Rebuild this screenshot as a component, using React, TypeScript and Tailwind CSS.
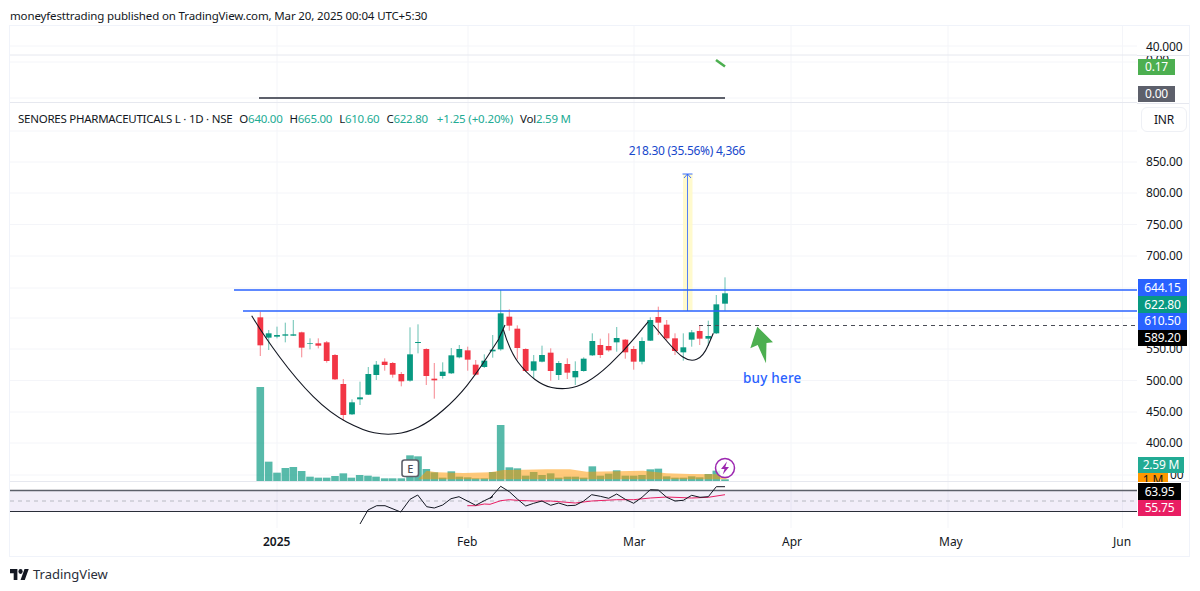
import React from "react";

type C = [number, number, number, number, number, "R" | "G"];
const c1: C[] = [
  [91,142,226,125,258,"R"],[116,190,203,180,240,"G"],[141,195,200,170,205,"G"],[166,193,197,158,217,"G"],[190,193,197,150,198,"G"],
  [215,187,233,185,262,"R"],[240,219,221,205,238,"G"],[265,220,227,205,235,"R"],[290,217,273,213,278,"R"],[315,255,328,252,330,"R"],
  [340,342,435,327,452,"R"],[366,397,433,388,435,"G"],[390,382,388,335,405,"G"],[415,312,374,291,375,"G"],[439,284,315,273,330,"G"],
  [464,275,285,265,302,"R"],[488,279,314,276,323,"R"],[514,312,334,306,349,"R"],[540,253,332,172,335,"G"],[564,216,219,163,250,"G"],
  [589,237,318,235,345,"R"],[613,326,331,279,386,"R"],[638,305,318,277,326,"G"],[664,256,310,234,312,"G"],[688,237,262,225,265,"G"],
  [713,241,269,230,302,"R"],[737,284,314,270,316,"R"],[763,272,291,253,294,"G"],[788,239,244,195,263,"G"],
];
const c2: C[] = [
  [32,130,238,60,242,"G"],[58,140,167,118,182,"R"],[82,176,234,166,268,"R"],[107,237,303,235,306,"R"],[131,274,302,255,325,"G"],
  [156,255,275,227,277,"G"],[182,248,303,235,332,"R"],[206,279,315,273,330,"G"],[232,282,308,265,327,"R"],[256,303,322,274,345,"G"],
  [281,266,303,262,305,"G"],[307,213,256,190,258,"G"],[331,225,255,206,264,"R"],[356,228,241,190,245,"R"],[380,204,217,171,245,"G"],
  [406,209,247,207,266,"R"],[431,237,275,228,299,"R"],[456,213,275,202,283,"G"],[481,150,212,142,213,"G"],[505,141,158,110,195,"R"],
  [530,164,205,150,212,"R"],[555,205,243,190,255,"R"],[580,232,247,190,272,"G"],[605,187,209,180,230,"G"],[629,183,206,165,225,"R"],
  [655,198,206,152,228,"G"],[679,103,190,75,192,"G"],[705,70,101,22,122,"G"],
];
const candles = [
  ...c1.map((c) => ({ c, ox: 230 })),
  ...c2.map((c) => ({ c, ox: 490 })),
];

const v1 = [[116,155],[141,188],[166,174],[190,171],[215,183],[240,200],[265,203],[290,203],[315,198],[340,190],[364,203],[389,195],[414,197],[438,200],[464,205],[488,205],[514,205],[540,136],[564,139],[589,177],[613,187],[638,203],[664,184],[688,200],[713,202],[737,205],[763,205],[788,186]];
const v2 = [[32,45],[58,172],[82,175],[107,197],[131,186],[156,195],[182,190],[206,203],[232,200],[256,200],[281,203],[307,169],[331,197],[356,191],[380,181],[406,197],[431,197],[456,195],[481,178],[505,176],[530,199],[555,203],[580,203],[605,199],[629,202],[655,192],[679,182],[705,208]];
const bars = [
  { x: 260.3, y: 387 },
  ...v1.map(([x, y]) => ({ x: 230 + x / 3, y: 410 + y / 3 })),
  ...v2.map(([x, y]) => ({ x: 490 + x / 3, y: 410 + y / 3 })),
];

const map = (pts: number[][], ox: number, oy: number) => pts.map(([x, y]) => [ox + x / 3, oy + y / 3]);
const poly = (pts: number[][]) => pts.map((p) => p.map((n) => n.toFixed(1)).join(",")).join(" ");
const smooth = (pts: number[][]) => {
  let d = `M${pts[0][0].toFixed(1)} ${pts[0][1].toFixed(1)}`;
  for (let i = 1; i < pts.length - 1; i++) {
    const mx = (pts[i][0] + pts[i + 1][0]) / 2;
    const my = (pts[i][1] + pts[i + 1][1]) / 2;
    d += ` Q${pts[i][0].toFixed(1)} ${pts[i][1].toFixed(1)} ${mx.toFixed(1)} ${my.toFixed(1)}`;
  }
  const l = pts[pts.length - 1];
  return d + ` L${l[0].toFixed(1)} ${l[1].toFixed(1)}`;
};

const rsi = [
  ...map([[390,342],[414,300],[440,287],[465,287],[512,306],[540,268],[563,255],[590,290],[613,294],[638,285],[663,266],[687,260],[737,286],[763,272],[788,260]], 230, 410),
  ...map([[0,265],[32,229],[58,245],[82,267],[107,288],[131,280],[156,273],[182,286],[206,279],[232,287],[256,286],[281,273],[305,254],[331,259],[356,265],[380,252],[406,268],[431,280],[456,262],[481,239],[505,240],[530,262],[555,273],[580,271],[605,256],[630,262],[655,260],[679,230],[705,230]], 490, 410),
];
const rsiMa = [
  ...map([[712,287],[737,287],[763,282]], 230, 410),
  ...map([[0,283],[32,272],[58,269],[82,271],[131,273],[182,273],[256,279],[305,273],[380,269],[431,269],[481,264],[530,261],[605,264],[655,262],[705,254]], 490, 410),
];
const volMa = [
  ...map([[565,208],[590,182],[620,187],[700,189],[780,187]], 230, 410),
  ...map([[0,187],[40,180],[100,179],[170,178],[240,178],[290,185],[380,184],[460,182],[530,190],[600,192],[680,193],[715,208]], 490, 410),
];
const cup1 = map([[65,137],[100,195],[200,330],[300,430],[400,482],[465,495],[530,488],[600,455],[680,385],[740,310],[808,205]], 230, 270);
const cup2 = map([[40,178],[60,245],[110,310],[160,347],[210,358],[260,352],[320,320],[400,245],[475,155]], 490, 270);
const cup3 = map([[490,165],[555,245],[600,276],[640,260],[670,190]], 490, 270);

const hGrid = [46, 62, 98, 131, 162, 193, 224.5, 256, 288, 318, 349, 380.5, 412, 443, 475];
const vGrid = [277, 468, 634, 791, 948, 1122.5];

const Tag = ({ t, c }: { t: string; c: string }) => (
  <div className={`relative z-10 flex items-center justify-center text-[12px] leading-none text-white ${c}`}>{t}</div>
);
const Row = ({ t }: { t: string }) => <div className="flex h-[31.3px] items-center pl-[9px]">{t}</div>;

const V = ({ l, v }: { l: string; v: string }) => (
  <span className="flex">
    <span>{l}</span>
    <span className="text-[#22ab94]">{v}</span>
  </span>
);

export default function App() {
  return (
    <div className="flex h-[591px] w-[1200px] flex-col overflow-hidden bg-white font-['Noto_Sans',sans-serif] text-[#131722]">
      <div className="flex h-[25px] items-center pl-[10px] pt-[6px] text-[11.5px] tracking-[-0.14px] text-[#131722]">
        moneyfesttrading published on TradingView.com, Mar 20, 2025 00:04 UTC+5:30
      </div>
      <div className="ml-[9px] flex h-[532px] w-[1181px] flex-col border border-[#f0f3fa]">
        <div className="relative flex h-[502px]">
          <svg className="block h-[502px] w-[1127px] shrink-0" viewBox="10 26 1127 502">
            {vGrid.map((x) => (
              <line key={x} x1={x} x2={x} y1={26} y2={528} stroke="#f4f5f9" />
            ))}
            {hGrid.map((y) => (
              <line key={y} x1={10} x2={1137} y1={y} y2={y} stroke="#f4f5f9" />
            ))}
            <line x1={10} x2={1137} y1={55} y2={55} stroke="#e6e8ef" />
            <line x1={10} x2={1137} y1={102.5} y2={102.5} stroke="#e6e8ef" />
            <line x1={10} x2={1137} y1={481.5} y2={481.5} stroke="#e6e8ef" />

            <line x1={716} y1={60} x2={725} y2={66.5} stroke="#4caf50" strokeWidth={2.6} />
            <line x1={259} x2={725} y1={98} y2={98} stroke="#5d606b" strokeWidth={2} />

            {bars.map((b, i) => (
              <rect key={i} x={b.x - 3.8} y={b.y} width={7.6} height={481 - b.y} fill="#089981" opacity={0.68} />
            ))}
            <polygon points={poly(volMa)} fill="#ff9800" opacity={0.52} />

            <rect x={683} y={174} width={9.5} height={137} fill="#fff9c4" opacity={0.85} />
            <line x1={687.5} x2={687.5} y1={174} y2={311} stroke="#2962ff" strokeOpacity={0.8} />
            <path d="M682.5 174 H692.5 M684 178 L687.5 174 L691 178" fill="none" stroke="#2962ff" strokeOpacity={0.9} />
            <text x={687} y={154.5} textAnchor="middle" fontSize={12} letterSpacing={-0.28} fill="#1848cc">218.30 (35.56%) 4,366</text>

            {candles.map(({ c: [x, t, b, wt, wb, k], ox }, i) => {
              const col = k === "R" ? "#f23645" : "#089981";
              const cx = ox + x / 3;
              return (
                <g key={i}>
                  <rect x={cx - 0.6} y={270 + wt / 3} width={1.2} height={(wb - wt) / 3} fill={col} opacity={0.5} />
                  <rect x={cx - 2.9} y={270 + t / 3} width={5.8} height={(b - t) / 3} fill={col} />
                </g>
              );
            })}

            <path d={smooth(cup1)} fill="none" stroke="#131722" strokeWidth={1.1} />
            <path d="M499 338 L505 325" fill="none" stroke="#131722" strokeWidth={1.1} />
            <path d={smooth(cup2)} fill="none" stroke="#131722" strokeWidth={1.1} />
            <path d={smooth(cup3)} fill="none" stroke="#131722" strokeWidth={1.1} />

            <line x1={234} x2={1137} y1={290} y2={290} stroke="#2962ff" strokeWidth={1.6} />
            <line x1={243} x2={1137} y1={311} y2={311} stroke="#2962ff" strokeWidth={1.6} />
            <line x1={699} x2={1137} y1={325.5} y2={325.5} stroke="#4a4d57" strokeDasharray="4 4" />

            <polygon points="757.3,326.7 773,342.3 766.5,343 766,363.3 757.7,345 750.3,348.3" fill="#4caf50" />
            <text x={743} y={383} fontSize={13.5} fontWeight={500} letterSpacing={0.2} fill="#2962ff">buy here</text>

            <rect x={402} y={460} width={16.5} height={16.5} rx={2.5} fill="#ffffff" stroke="#5d606b" strokeWidth={1.6} />
            <text x={410.2} y={472.5} textAnchor="middle" fontSize={11} fontWeight={500} fill="#4a4d57">E</text>

            <circle cx={725} cy={468} r={9.5} fill="#ffffff" fillOpacity={0.75} stroke="#9c27b0" strokeWidth={1.5} />
            <polygon points="727,461.5 721,469 724.5,469 722.8,474.5 729,467 725.3,467" fill="#9c27b0" />

            <rect x={10} y={491} width={1127} height={20} fill="#7e57c2" opacity={0.1} />
            <line x1={10} x2={1137} y1={490.5} y2={490.5} stroke="#5d606b" strokeWidth={1.6} />
            <line x1={10} x2={1137} y1={501} y2={501} stroke="#b8bac2" strokeDasharray="4 4" />
            <line x1={10} x2={1137} y1={511.5} y2={511.5} stroke="#2a2e39" />
            <polyline points={poly(rsiMa)} fill="none" stroke="#e91e63" strokeWidth={1} />
            <polyline points={poly(rsi)} fill="none" stroke="#131722" strokeWidth={1} />
          </svg>

          <div className="absolute left-[8px] top-[85px] flex items-center gap-[7px] text-[11.5px] leading-[16px] tracking-[-0.26px]">
            <span>SENORES PHARMACEUTICALS L · 1D · NSE</span>
            <V l="O" v="640.00" />
            <V l="H" v="665.00" />
            <V l="L" v="610.60" />
            <V l="C" v="622.80" />
            <span className="pl-[2px] tracking-[-0.14px] text-[#22ab94]">+1.25 (+0.20%)</span>
            <V l="Vol" v="2.59 M" />
          </div>

          <div className="flex w-[52px] shrink-0 flex-col overflow-hidden text-[12px] leading-none tracking-[-0.2px]">
            <div className="flex h-[30px] shrink-0 items-end border-b border-[#e6e8ef] pb-[2px] pl-[9px]">40.000</div>

            <div className="relative flex h-[48px] shrink-0 flex-col gap-[11px] border-b border-[#e6e8ef] pl-px pt-[3px]">
              <span className="absolute left-[9px] top-0 h-[4px] overflow-hidden leading-[8px]">0.00</span>
              <Tag t="0.17" c="h-[16px] w-[37px] bg-[#4caf50]" />
              <Tag t="0.00" c="h-[16px] w-[37px] bg-[#5d606b]" />
            </div>

            <div className="flex h-[378px] shrink-0 flex-col border-b border-[#e6e8ef] pt-[3px]">
              <div className="ml-[4px] flex h-[25px] w-[46px] shrink-0 items-center justify-center rounded-[6px] border border-[#eef0f5]">INR</div>
              <div className="mt-[14.5px] flex shrink-0 flex-col">
                <Row t="850.00" />
                <Row t="800.00" />
                <Row t="750.00" />
                <Row t="700.00" />
              </div>
              <div className="mt-[7.5px] flex shrink-0 flex-col pl-px">
                <Tag t="644.15" c="h-[17px] w-[49px] bg-[#2962ff]" />
                <Tag t="622.80" c="h-[17px] w-[49px] bg-[#089981]" />
                <Tag t="610.50" c="h-[16.5px] w-[49px] bg-[#2962ff]" />
                <Tag t="589.20" c="h-[16.5px] w-[49px] bg-black" />
              </div>
              <div className="mt-[-12.5px] flex shrink-0 flex-col">
                <Row t="550.00" />
                <Row t="500.00" />
                <Row t="450.00" />
                <Row t="400.00" />
              </div>
              <div className="relative mt-[-2px] flex shrink-0 flex-col pl-px">
                <Tag t="2.59 M" c="h-[16px] w-[46px] bg-[#22ab94]" />
                <div className="flex h-[9px] items-start gap-[2px] overflow-hidden">
                  <span className="flex h-[9px] w-[30px] shrink-0 justify-center bg-[#ff9800] leading-[14px]">1 M</span>
                  <span className="mt-[-4px]">00</span>
                </div>
              </div>
            </div>

            <div className="flex flex-col pl-px pt-px">
              <Tag t="63.95" c="h-[17px] w-[43px] bg-black" />
              <Tag t="55.75" c="h-[16px] w-[43px] bg-[#e91e63]" />
            </div>
          </div>
        </div>
        <div className="grid h-[28px] grid-cols-[194px_166px_159px_157px_174px_auto] pl-[253px] pt-[8px] text-[12px] leading-none">
          <span className="font-semibold">2025</span>
          <span>Feb</span>
          <span>Mar</span>
          <span>Apr</span>
          <span>May</span>
          <span>Jun</span>
        </div>
      </div>
      <div className="flex items-center gap-[4px] pl-[10px] pt-[9px]">
        <svg className="h-[11px] w-[19px]" viewBox="0 4 36 18" preserveAspectRatio="none">
          <path d="M14 22H7V11H0V4h14v18zM28 22h-8l7.5-18h8L28 22z" fill="#131722" />
          <circle cx="20" cy="8" r="4" fill="#131722" />
        </svg>
        <span className="text-[13px] leading-[16px] text-[#2a2e39]">TradingView</span>
      </div>
    </div>
  );
}
